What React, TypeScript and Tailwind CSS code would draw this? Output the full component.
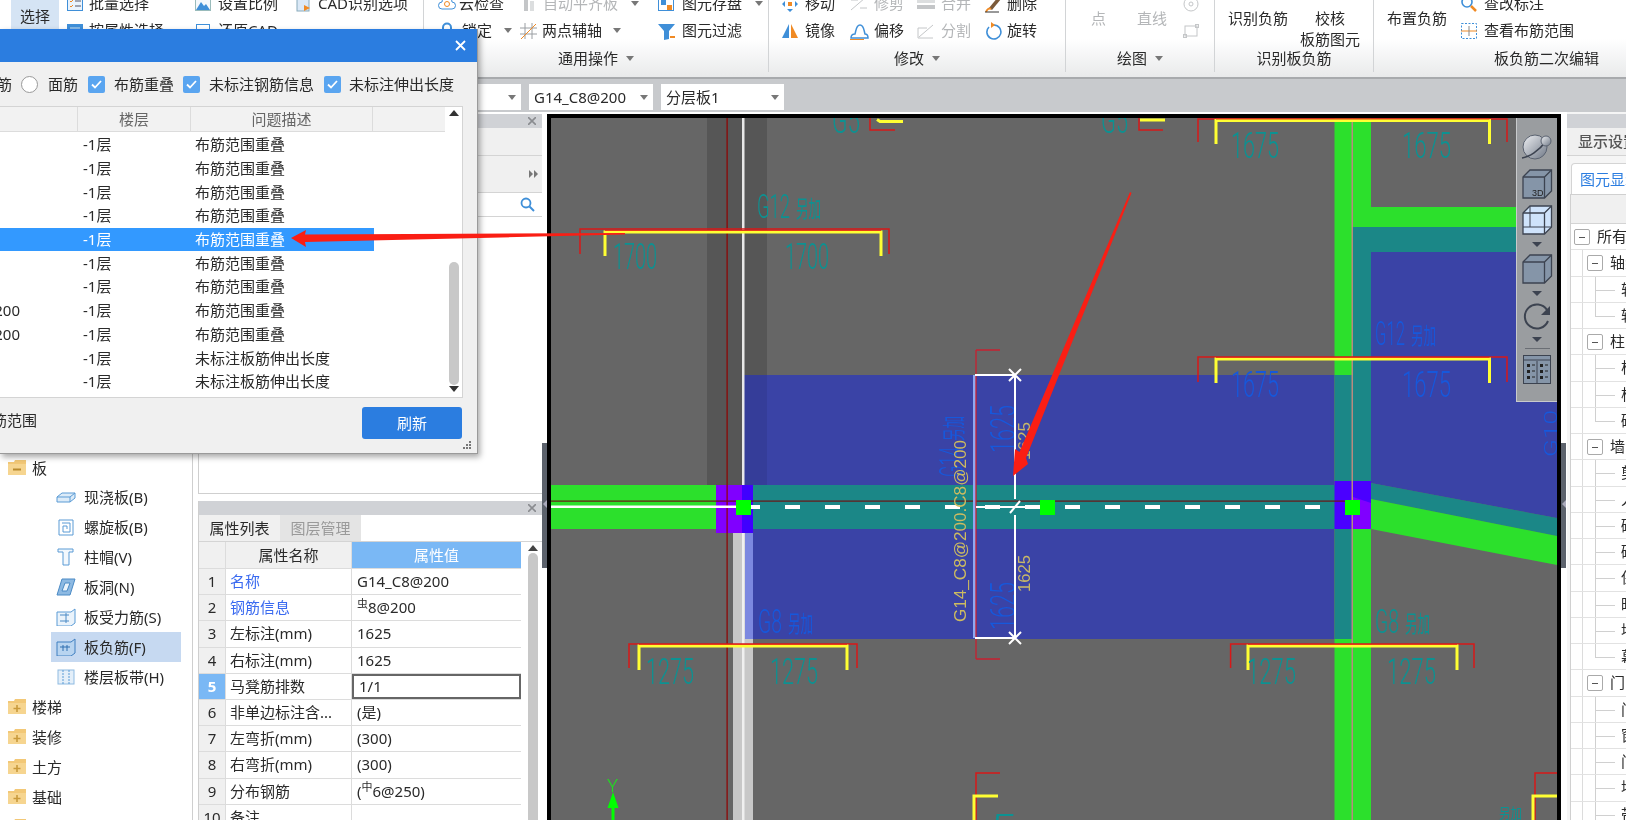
import React from "react";

const B = "#3f8fd8";
const O = "#f08a24";
const G = "#c4c6c8";
const TX = "text-[#2a2a2a]";

const Svg = ({ children, w = 18, h = 18 }: { children: React.ReactNode; w?: number; h?: number }) => (
  <svg width={w} height={h} viewBox={`0 0 ${w} ${h}`} fill="none" className="flex-none">{children}</svg>
);

const ic = {
  batch: <Svg><rect x="1.5" y="2.5" width="15" height="13" stroke={B} fill="#eaf3fc" /><path d="M4 6l1 1 2-2M4 11l1 1 2-2" stroke={O} /><path d="M9 6h6M9 11h6" stroke="#556" /></Svg>,
  attr: <Svg><rect x="1" y="2" width="16" height="14" fill={B} /><path d="M4 6h10M4 10h10" stroke="#cfe4f7" /></Svg>,
  scale: <Svg><rect x="1.5" y="2.5" width="15" height="13" fill="#f4f8fc" stroke="#9bb" /><path d="M2 15l5-8 3 4 2-2 4 6z" fill={B} /></Svg>,
  restore: <Svg><rect x="2.5" y="2.5" width="13" height="13" stroke={B} /><circle cx="11" cy="12" r="4" stroke={O} fill="#fff" /></Svg>,
  cadopt: <Svg><rect x="2" y="2" width="12" height="14" fill="#dbe9f7" stroke="#8ab" /><path d="M9 10l6 3-6 3z" fill={O} /></Svg>,
  cloud: <Svg><path d="M4 14a3.5 3.5 0 0 1 0-7 5 5 0 0 1 10 0 3.5 3.5 0 0 1 0 7z" stroke={B} fill="#fff" /><circle cx="9" cy="9" r="2.5" stroke={O} /></Svg>,
  align: <Svg w={13}><rect x="1" y="2" width="4" height="14" fill={G} /><rect x="7" y="6" width="4" height="10" fill="#dcdedf" /></Svg>,
  save: <Svg><rect x="1.5" y="2.5" width="15" height="13" stroke={B} fill="#fff" /><rect x="4" y="5" width="5" height="5" fill={B} /><rect x="10" y="10" width="5" height="5" fill={O} /></Svg>,
  lock: <Svg><path d="M5 9V5.5a4 4 0 0 1 8 0V9" stroke={B} strokeWidth="2" /><rect x="3" y="9" width="12" height="8" rx="1" fill={B} /></Svg>,
  axis: <Svg w={19}><path d="M6 1v16M13 1v16M1 6h17M1 12h17" stroke="#9a9ea2" /><path d="M2 17L17 2" stroke={O} /></Svg>,
  filter: <Svg w={19}><path d="M1 2h17l-6 7v8l-5 1V9z" fill={B} /><rect x="13" y="14" width="5" height="2" fill={O} /></Svg>,
  move: <Svg><path d="M9 1l3 3H6zM9 17l3-3H6zM1 9l3-3v6zM17 9l-3-3v6z" fill={B} /><rect x="7" y="7" width="4" height="4" fill={O} /></Svg>,
  mirror: <Svg><path d="M8 2v14H1z" fill={B} /><path d="M10 2v14h7z" fill={O} /></Svg>,
  trim: <Svg><path d="M1 15L15 3M1 5h7M10 13h7" stroke={G} /></Svg>,
  merge: <Svg w={20}><rect x="1" y="4" width="18" height="4" fill="#dcdedf" /><rect x="1" y="10" width="18" height="4" fill={G} /></Svg>,
  del: <Svg><path d="M5 13L14 2l3 2-9 11z" fill="#7b5a3a" /><path d="M2 17c1-3 3-4 5-3" stroke={O} strokeWidth="2" /><path d="M1 17h14" stroke="#333" /></Svg>,
  offset: <Svg w={21}><path d="M2 16c0-2 1-4 4-4 1-3 1-9 5-9s4 6 5 9c2 0 3 2 3 4z" stroke={B} strokeWidth="1.5" fill="#fff" /><path d="M1 17.5h14" stroke={O} /></Svg>,
  split: <Svg w={20}><path d="M2 16h15M2 16V6h9M3 15L17 3" stroke={G} /></Svg>,
  rot: <Svg><path d="M10 3a7 7 0 1 1-5 2" stroke={B} strokeWidth="1.6" /><path d="M7 0l4 3-4 3z" fill={O} /></Svg>,
  circ: <Svg><circle cx="9" cy="9" r="7" stroke={G} /><circle cx="9" cy="9" r="2" stroke={G} /></Svg>,
  rect: <Svg><rect x="3" y="4" width="12" height="10" stroke={G} /><rect x="1.5" y="12.5" width="3" height="3" stroke={G} /><rect x="13.5" y="2.5" width="3" height="3" stroke={G} /></Svg>,
  query: <Svg><circle cx="7" cy="7" r="5" stroke={B} strokeWidth="1.6" fill="#fff" /><path d="M11 11l5 5" stroke={O} strokeWidth="2.5" /></Svg>,
  range: <Svg><rect x="1.5" y="1.5" width="15" height="15" stroke={B} strokeDasharray="2 1.5" /><path d="M1 9h16" stroke={O} /><path d="M9 4v10" stroke="#888" /></Svg>,
};

const Arrow = ({ cls = "ml-2" }: { cls?: string }) => (
  <svg width="8" height="5" viewBox="0 0 8 5" className={`flex-none ${cls}`}><path d="M0 0h8L4 5z" fill="#777" /></svg>
);

const Tool = ({ icon, label, gray, arrow, gap = "gap-[5px]", arrowCls }: { icon?: React.ReactNode; label: string; gray?: boolean; arrow?: boolean; gap?: string; arrowCls?: string }) => (
  <div className={`flex items-center h-[27px] whitespace-nowrap ${gap} ${gray ? "text-[#b4b6b8]" : TX}`}>
    {icon}
    <span>{label}</span>
    {arrow && <Arrow cls={arrowCls ?? "ml-[3px]"} />}
  </div>
);

const Col = ({ cls, children }: { cls: string; children: React.ReactNode }) => <div className={`flex-none flex flex-col ${cls}`}>{children}</div>;

const Group = ({ w, label, last, labelCls = "justify-center", children }: { w: string; label?: string; last?: boolean; labelCls?: string; children: React.ReactNode }) => (
  <div className={`flex-none flex flex-col h-[72px] ${w} ${last ? "" : "border-r border-[#d2d4d6]"}`}>
    <div className="h-[54px] -mt-[10px] flex">{children}</div>
    <div className={`h-[28px] flex items-center ${labelCls} ${TX}`}>
      {label && <span>{label}</span>}
      {label && label !== "识别板负筋" && label !== "板负筋二次编辑" && <Arrow />}
    </div>
  </div>
);

const BigLabel = ({ cls, gray, children }: { cls: string; gray?: boolean; children: React.ReactNode }) => (
  <div className={`flex-none pt-[18px] text-center leading-[21px] ${cls} ${gray ? "text-[#b4b6b8]" : TX}`}>{children}</div>
);

const Ribbon = () => (
  <div className="h-[77px] flex overflow-hidden bg-gradient-to-b from-white from-50% to-[#e9eaeb] flex-none">
    <Group w="w-[424px]">
      <div className={`flex-none ml-[11px] w-[48px] bg-[#d5e4f4] flex items-start justify-center pt-[19px] ${TX}`}>选择</div>
      <Col cls="ml-[7px] w-[128px]">
        <Tool icon={ic.batch} label="批量选择" />
        <Tool icon={ic.attr} label="按属性选择" />
      </Col>
      <Col cls="w-[101px]">
        <Tool icon={ic.scale} label="设置比例" gap="gap-[6px]" />
        <Tool icon={ic.restore} label="还原CAD" gap="gap-[6px]" />
      </Col>
      <Col cls="">
        <Tool icon={ic.cadopt} label="CAD识别选项" />
      </Col>
    </Group>
    <Group w="w-[345px]" label="通用操作">
      <Col cls="ml-[14px] w-[81px]">
        <Tool icon={ic.cloud} label="云检查" gap="gap-[3px]" />
        <Tool icon={ic.lock} label="锁定" gap="gap-[6px]" arrow arrowCls="ml-[6px]" />
      </Col>
      <Col cls="w-[138px]">
        <div className="pl-[4px]"><Tool icon={ic.align} label="自动平齐板" gray arrow gap="gap-[7px]" arrowCls="ml-[6px]" /></div>
        <Tool icon={ic.axis} label="两点辅轴" gap="gap-[4px]" arrow arrowCls="ml-[7px]" />
      </Col>
      <Col cls="">
        <Tool icon={ic.save} label="图元存盘" gap="gap-[7px]" arrow arrowCls="ml-[6px]" />
        <Tool icon={ic.filter} label="图元过滤" gap="gap-[6px]" />
      </Col>
    </Group>
    <Group w="w-[297px]" label="修改">
      <Col cls="ml-[12px] w-[68px]">
        <Tool icon={ic.move} label="移动" gap="gap-[6px]" />
        <Tool icon={ic.mirror} label="镜像" gap="gap-[6px]" />
      </Col>
      <Col cls="w-[67px]">
        <div className="pl-[1px]"><Tool icon={ic.trim} label="修剪" gray gap="gap-[6px]" /></div>
        <Tool icon={ic.offset} label="偏移" gap="gap-[4px]" />
      </Col>
      <Col cls="w-[68px]">
        <Tool icon={ic.merge} label="合并" gray />
        <Tool icon={ic.split} label="分割" gray />
      </Col>
      <Col cls="">
        <Tool icon={ic.del} label="删除" gap="gap-[5px]" />
        <Tool icon={ic.rot} label="旋转" gap="gap-[5px]" />
      </Col>
    </Group>
    <Group w="w-[149px]" label="绘图">
      <BigLabel cls="ml-[25px] w-[46px] text-left" gray>点</BigLabel>
      <BigLabel cls="w-[45px] text-left" gray>直线</BigLabel>
      <Col cls="">
        <div className="h-[27px] flex items-center">{ic.circ}</div>
        <div className="h-[27px] flex items-center">{ic.rect}</div>
      </Col>
    </Group>
    <Group w="w-[159px]" label="识别板负筋">
      <BigLabel cls="ml-[13px] w-[60px]">识别负筋</BigLabel>
      <BigLabel cls="ml-[12px] w-[60px]">校核<br />板筋图元</BigLabel>
    </Group>
    <Group w="flex-1" label="板负筋二次编辑" labelCls="justify-start pl-[120px]" last>
      <BigLabel cls="ml-[13px] w-[60px]">布置负筋</BigLabel>
      <Col cls="ml-[13px]">
        <Tool icon={ic.query} label="查改标注" gap="gap-[6px]" />
        <Tool icon={ic.range} label="查看布筋范围" gap="gap-[6px]" />
      </Col>
    </Group>
  </div>
);

const Select = ({ cls, text }: { cls: string; text?: string }) => (
  <div className={`flex-none h-[26px] bg-white flex items-center pl-[5px] pr-[5px] ${TX} ${cls}`}>
    <span className="flex-1">{text}</span>
    <Arrow cls="" />
  </div>
);

const Toolbar = () => (
  <div className="h-[35px] flex-none flex items-start pt-[5px] pl-[400px] gap-[8px] bg-[#c8cacd] border-t-2 border-[#a8aaad]">
    <Select cls="w-[121px]" />
    <Select cls="w-[124px]" text="G14_C8@200" />
    <Select cls="w-[123px]" text="分层板1" />
  </div>
);

const Folder = ({ minus }: { minus?: boolean }) => (
  <svg width="20" height="18" viewBox="0 0 20 18" className="flex-none">
    <path d="M1 3h6l1-2h11v15H1z" fill="#f2c877" />
    <rect x="1" y="5" width="18" height="11" fill="#f6d590" />
    {minus ? <path d="M6 10.5h8" stroke="#b98a2e" strokeWidth="2" /> : <path d="M6.5 10.5h7M10 7v7" stroke="#c99a3c" strokeWidth="1.6" />}
  </svg>
);

const treeIcons: Record<string, React.ReactNode> = {
  slab: <Svg w={20}><path d="M1 9l5-4h13v5l-5 4H1z" fill="#dcebf8" stroke="#5a9bd5" /><path d="M1 9h13v5M14 9l5-4" stroke="#5a9bd5" /></Svg>,
  spiral: <Svg w={20}><path d="M3 2h14v15H3zM6 5h8v9H7V8h4v3" stroke="#5a9bd5" /></Svg>,
  cap: <Svg w={20}><path d="M2 1h15v3h-4v13H7V4H2z" stroke="#5a9bd5" fill="#f3f8fd" /></Svg>,
  hole: <Svg w={20}><path d="M6 1h13l-5 16H1z" fill="#8db9e2" stroke="#4a8ac5" /><path d="M9 5h5l-3 8H6z" fill="#eaf3fb" stroke="#4a8ac5" /></Svg>,
  force: <Svg w={20}><path d="M1 4h14l4-3v14l-4 3H1z" fill="#eaf3fb" stroke="#5a9bd5" /><path d="M4 7h9M4 13h9M10 5v10" stroke="#4a8ac5" /></Svg>,
  neg: <Svg w={20}><path d="M1 4h14l4-3v14l-4 3H1z" fill="#b8d4f0" stroke="#3f7fc0" /><path d="M4 9h10M7 7v6M11 7v6" stroke="#2f6fb0" /></Svg>,
  band: <Svg w={20}><rect x="2" y="2" width="16" height="14" fill="#e4eff9" stroke="#8fbbe2" /><path d="M7 2v14M13 2v14" stroke="#5a9bd5" strokeDasharray="2 1" /></Svg>,
};

const LeftTree = () => (
  <div className={`flex-none w-[193px] border-r border-[#cfcfcf] bg-white pt-[342px] overflow-hidden ${TX}`}>
    <div className="h-[28px] flex items-center pl-[7px] gap-[5px]"><Folder minus /><span>板</span></div>
    {[
      ["slab", "现浇板(B)"], ["spiral", "螺旋板(B)"], ["cap", "柱帽(V)"], ["hole", "板洞(N)"], ["force", "板受力筋(S)"], ["neg", "板负筋(F)"], ["band", "楼层板带(H)"],
    ].map(([k, t]) => (
      <div key={t} className={`h-[30px] ml-[51px] w-[130px] flex items-center pl-[5px] gap-[8px] ${k === "neg" ? "bg-[#c6d9f1]" : ""}`}>
        {treeIcons[k]}<span className="whitespace-nowrap">{t}</span>
      </div>
    ))}
    {["楼梯", "装修", "土方", "基础", ""].map((t, i) => (
      <div key={i} className="h-[30px] flex items-center pl-[7px] gap-[5px]"><Folder /><span>{t}</span></div>
    ))}
  </div>
);

const PanelHead = () => (
  <div className="h-[14px] flex-none bg-[#d0d2d6] flex items-center justify-end pr-[6px]">
    <svg width="8" height="8" viewBox="0 0 8 8"><path d="M0 0l8 8M8 0L0 8" stroke="#8a8c90" strokeWidth="1.6" /></svg>
  </div>
);

const props: [string, React.ReactNode, boolean?][] = [
  ["名称", "G14_C8@200", true],
  ["钢筋信息", <><sup className="text-[11px] -top-[4px] relative align-baseline">虫</sup>8@200</>, true],
  ["左标注(mm)", "1625"],
  ["右标注(mm)", "1625"],
  ["马凳筋排数", "1/1"],
  ["非单边标注含...", "(是)"],
  ["左弯折(mm)", "(300)"],
  ["右弯折(mm)", "(300)"],
  ["分布钢筋", <>(<sup className="text-[11px] -top-[4px] relative align-baseline">中</sup>6@250)</>],
  ["备注", ""],
];

const MidPanel = () => (
  <div className={`flex-none w-[344px] ml-[5px] flex flex-col ${TX}`}>
    <div className="h-[380px] mt-[2px] flex-none flex flex-col border-l border-b border-[#cfcfcf] bg-white">
      <PanelHead />
      <div className="h-[28px] flex-none bg-[#f0f0f0] border-b border-[#d4d4d4]" />
      <div className="h-[37px] flex-none bg-[#f0f0f0] border-b border-[#d4d4d4] flex items-center justify-end pr-[3px]">
        <svg width="10" height="8" viewBox="0 0 10 8"><path d="M0 0l4 4-4 4zM5 0l4 4-4 4z" fill="#777" /></svg>
      </div>
      <div className="h-[24px] flex-none border-b border-[#d4d4d4] flex items-center justify-end pr-[7px]">
        <svg width="15" height="15" viewBox="0 0 15 15" fill="none"><circle cx="6" cy="6" r="4.5" stroke="#3f8fd8" strokeWidth="1.8" /><path d="M9.5 9.5L14 14" stroke="#3f8fd8" strokeWidth="2" /></svg>
      </div>
    </div>
    <div className="mt-[7px] flex-1 flex flex-col border-l border-[#cfcfcf] bg-white overflow-hidden">
      <PanelHead />
      <div className="h-[27px] flex-none flex border-b border-[#d4d4d4]">
        <div className="w-[81px] flex items-center justify-center bg-[#f0f0f0]">属性列表</div>
        <div className="w-[81px] flex items-center justify-center bg-[#e4e4e4] text-[#9a9a9a]">图层管理</div>
      </div>
      <div className="flex flex-1">
        <div className="w-[322px] flex-none">
          <div className="h-[27px] flex border-b border-[#dcdcdc]">
            <div className="w-[27px] bg-[#f0f0f0] border-r border-[#dcdcdc]" />
            <div className="w-[126px] bg-[#f0f0f0] border-r border-[#dcdcdc] flex items-center justify-center">属性名称</div>
            <div className="flex-1 bg-[#7ab8f5] text-white flex items-center justify-center">属性值</div>
          </div>
          {props.map(([k, v, blue], i) => (
            <div key={k} className="h-[26.2px] flex border-b border-[#dcdcdc]">
              <div className={`w-[27px] flex-none border-r border-[#dcdcdc] flex items-center justify-center ${i === 4 ? "bg-[#7ab8f5] text-white font-bold" : "bg-[#f0f0f0]"}`}>{i + 1}</div>
              <div className={`w-[126px] flex-none border-r border-[#dcdcdc] flex items-center pl-[4px] whitespace-nowrap ${blue ? "text-[#3a6af0]" : ""}`}>{k}</div>
              <div className={`flex-1 flex items-center pl-[5px] ${i === 4 ? "border-2 border-[#666] pl-[4px]" : ""}`}>{v}</div>
            </div>
          ))}
        </div>
        <div className="flex-1 flex flex-col items-center pl-[7px] pr-[5px]">
          <svg width="10" height="6" viewBox="0 0 10 6" className="mt-[3px] flex-none"><path d="M0 6h10L5 0z" fill="#444" /></svg>
          <div className="w-[10px] flex-1 mt-[2px] bg-[#c8c8c8] rounded-t-[5px]" />
        </div>
      </div>
    </div>
  </div>
);

const Splitter = () => (
  <div className="flex-none w-[5px] flex flex-col bg-white">
    <div className="h-[331px] flex-none" />
    <div className="h-[125px] flex-none bg-[#5c626c] flex flex-col items-center pt-[57px]">
      <svg width="4" height="8" viewBox="0 0 4 8"><path d="M4 0v8L0 4z" fill="#aab" /></svg>
    </div>
  </div>
);

const TEAL = "#0c9292";
const BLUE = "#1658dc";

const Cad = ({ x, y, w, h, t, fill, rot }: { x: number; y: number; w: number; h: number; t: string; fill: string; rot?: boolean }) => (
  <text
    x={x}
    y={y}
    fill={fill}
    fontSize={h * 1.39}
    fontWeight={300}
    fontFamily="Roboto, 'Liberation Sans', sans-serif"
    textLength={w}
    lengthAdjust="spacingAndGlyphs"
    transform={rot ? `rotate(-90 ${x} ${y})` : undefined}
  >
    {t}
  </text>
);

const Tag = ({ x, y, g, gw, fill, rot }: { x: number; y: number; g: string; gw: number; fill: string; rot?: boolean }) => (
  <g transform={rot ? `rotate(-90 ${x} ${y})` : undefined}>
    <Cad x={x} y={y} w={gw} h={24} t={g} fill={fill} />
    <text x={x + gw + 6} y={y - 1} fontSize="23" fill={fill} fontFamily="'Noto Sans CJK SC', sans-serif" textLength={25} lengthAdjust="spacingAndGlyphs">另加</text>
  </g>
);

const Bracket = ({ rx1, rx2, ry, rb, yx1, yx2, yy, yb }: { rx1: number; rx2: number; ry: number; rb: number; yx1: number; yx2: number; yy: number; yb: number }) => (
  <g fill="none">
    <path d={`M${rx1} ${rb}V${ry}H${rx2}V${rb}`} stroke="#d81818" strokeWidth="1.5" />
    <path d={`M${yx1} ${yb}V${yy}H${yx2}V${yb}`} stroke="#ffff33" strokeWidth="3" />
    <path d={`M${yx1} ${yy - 1.5}H${yx2}`} stroke="#e83a18" strokeWidth="1" />
  </g>
);

const dashes = [785, 825, 865, 905, 945, 985, 1025, 1065, 1105, 1145, 1185, 1225, 1265, 1305];

const Canvas = () => (
  <div className="relative flex-none w-[1014px] h-[706px] mt-[2px] border-4 border-b-0 border-black bg-[#666666] overflow-hidden">
    <svg viewBox="551 118 1006 702" width="1006" height="702" className="block">
      <rect x="744" y="375" width="590" height="264" fill="#3a43a6" />
      <path d="M1371 252H1557V518L1371 483z" fill="#3a43a6" />
      <rect x="707" y="118" width="60" height="257" fill="#000" fillOpacity=".15" />
      <rect x="744" y="375" width="23" height="110" fill="#000" fillOpacity=".08" />
      <rect x="707" y="375" width="37" height="110" fill="#000" fillOpacity=".15" />
      <rect x="551" y="485" width="165" height="44" fill="#2ce02c" />
      <rect x="753" y="485" width="582" height="44" fill="#1b8787" />
      <rect x="1334.5" y="118" width="18.5" height="257" fill="#2ce02c" />
      <rect x="1353" y="118" width="18" height="89" fill="#2ce02c" />
      <rect x="1353" y="207" width="204" height="20" fill="#2ce02c" />
      <rect x="1353" y="227" width="204" height="25" fill="#1b8787" />
      <rect x="1353" y="252" width="18" height="230" fill="#1b8787" />
      <rect x="1334.5" y="375" width="18.5" height="107" fill="#1b8787" />
      <rect x="1334.5" y="529" width="18.5" height="110" fill="#1b8787" />
      <rect x="1353" y="529" width="18" height="291" fill="#2ce02c" />
      <rect x="1334.5" y="639" width="18.5" height="181" fill="#2ce02c" />
      <path d="M1371 483L1557 518V536L1371 499z" fill="#1b8787" />
      <path d="M1371 499L1557 536V565L1371 529z" fill="#2ce02c" />
      <rect x="716" y="485" width="26" height="48" fill="#8000ff" />
      <rect x="742" y="485" width="11" height="48" fill="#4000ff" />
      <rect x="1334.5" y="481" width="36.5" height="48" fill="#4a00ff" />
      <path d="M1353 497L1371 503V529H1353z" fill="#8000ff" />
      <rect x="733" y="533" width="20" height="287" fill="#c8c8c8" />
      <rect x="745" y="533" width="8" height="106" fill="#7c88e0" />
      <rect x="742" y="118" width="2.5" height="367" fill="#e8e8e8" />
      <rect x="742" y="533" width="2.5" height="287" fill="#f0f0f0" />
      <rect x="726.5" y="118" width="1.2" height="702" fill="#900000" />
      <rect x="1351.5" y="118" width="1.5" height="702" fill="#b88a80" />
      <rect x="551" y="500.5" width="794" height="1.2" fill="#6b1515" />
      <rect x="551" y="505.5" width="186" height="2.5" fill="#ffffff" />
      <rect x="751" y="505" width="9" height="4" fill="#fff" />
      {dashes.map((x) => <rect key={x} x={x} y="505" width="15" height="4" fill="#fff" />)}
      <rect x="736" y="500" width="15" height="15" fill="#00ff00" />
      <rect x="1040" y="500" width="15" height="15" fill="#00ff00" />
      <rect x="1345" y="500" width="15" height="15" fill="#00ff00" />

      <Bracket rx1={580} rx2={889} ry={229} rb={254} yx1={605} yx2={881} yy={232} yb={256} />
      <Bracket rx1={1198} rx2={1507} ry={119} rb={142} yx1={1216} yx2={1489.5} yy={120.5} yb={144} />
      <Bracket rx1={1198} rx2={1507} ry={357} rb={382} yx1={1216} yx2={1489.5} yy={359} yb={383} />
      <Bracket rx1={629} rx2={857} ry={644} rb={668} yx1={639} yx2={847} yy={646} yb={670} />
      <Bracket rx1={1230.6} rx2={1474} ry={644} rb={668} yx1={1248} yx2={1457} yy={646} yb={670} />
      <path d="M870 118v12h25M1139 118v12h24" fill="none" stroke="#d81818" strokeWidth="1.5" />
      <path d="M877 119.5l3 2h23M1140 120h25" fill="none" stroke="#ffff33" strokeWidth="3" />
      <path d="M976 820V773H1000M1535 820V773H1557" fill="none" stroke="#d81818" strokeWidth="1.5" />
      <path d="M974 820V796H998M1533 820V796H1557" fill="none" stroke="#ffff33" strokeWidth="3" />

      <Cad x={613} y={269} w={44} h={26} t="1700" fill={TEAL} />
      <Cad x={785} y={269} w={44} h={26} t="1700" fill={TEAL} />
      <Cad x={1231} y={158} w={48} h={26} t="1675" fill={TEAL} />
      <Cad x={1402} y={158} w={49} h={26} t="1675" fill={TEAL} />
      <Cad x={646} y={684} w={48} h={27} t="1275" fill={TEAL} />
      <Cad x={770} y={684} w={48} h={27} t="1275" fill={TEAL} />
      <Cad x={1247} y={684} w={49} h={27} t="1275" fill={TEAL} />
      <Cad x={1387} y={684} w={49} h={27} t="1275" fill={TEAL} />
      <Tag x={757} y={218} g="G12" gw={33} fill={TEAL} />
      <Tag x={1375} y={633} g="G8" gw={24} fill={TEAL} />
      <Cad x={832} y={133} w={28} h={26} t="G5" fill={TEAL} />
      <Cad x={1101} y={133} w={27} h={26} t="G5" fill={TEAL} />

      <Cad x={1231} y={397} w={48} h={27} t="1675" fill={BLUE} />
      <Cad x={1402} y={397} w={49} h={27} t="1675" fill={BLUE} />
      <Tag x={1375} y={345} g="G12" gw={30} fill={BLUE} />
      <Tag x={758} y={633} g="G8" gw={24} fill={BLUE} />
      <Tag x={963} y={477} g="G14" gw={30} fill={BLUE} rot />
      <Cad x={1015} y={453} w={48} h={25} t="1625" fill={BLUE} rot />
      <Cad x={1015} y={630} w={48} h={25} t="1625" fill={BLUE} rot />
      <Cad x={1557} y={457} w={47} h={13} t="G10" fill={BLUE} rot />

      <rect x="973" y="375" width="3" height="263" fill="#8ea8f0" />
      <path d="M976 350V659M976 350H1000M976 659H1000" fill="none" stroke="#c82030" strokeWidth="1.3" />
      <path d="M975 375H1015M975 638H1015M1015 375V499M1015 515V638M976 507H1040" fill="none" stroke="#fff" strokeWidth="2" />
      <path d="M1009 369L1021 381M1021 369L1009 381M1009 632L1021 644M1021 632L1009 644M1010 513L1020 501" stroke="#fff" strokeWidth="2" />
      <text x="966" y="622" fill="#cdbb60" fontSize="17" fontFamily="'Liberation Sans', sans-serif" textLength="182" lengthAdjust="spacingAndGlyphs" transform="rotate(-90 966 622)">G14_C8@200.C8@200</text>
      <text x="1030" y="460" fill="#c8b868" fontSize="16" fontFamily="'Liberation Sans', sans-serif" textLength="38" lengthAdjust="spacingAndGlyphs" transform="rotate(-90 1030 460)">1625</text>
      <text x="1030" y="592" fill="#c8b868" fontSize="16" fontFamily="'Liberation Sans', sans-serif" textLength="37" lengthAdjust="spacingAndGlyphs" transform="rotate(-90 1030 592)">1625</text>

      <text x="607" y="792" fill="#20e020" fontSize="19" fontWeight={300} fontFamily="Roboto, sans-serif" textLength="11" lengthAdjust="spacingAndGlyphs">Y</text>
      <path d="M613 792L618.5 808H607.5z" fill="#00ff00" />
      <rect x="611.5" y="808" width="3" height="12" fill="#00ff00" />

      <text x="1499" y="818" fill={TEAL} fontSize="14" fontFamily="'Noto Sans CJK SC', sans-serif" textLength="23" lengthAdjust="spacingAndGlyphs">另加</text>
      <Cad x={990} y={840} w={26} h={26} t="5" fill={TEAL} />
    </svg>
    <NavBar />
  </div>
);

const tri = <svg width="10" height="5" viewBox="0 0 10 5" className="flex-none"><path d="M0 0h10L5 5z" fill="#3c4350" /></svg>;

const Cube = ({ fill, inner, label }: { fill: string; inner?: boolean; label?: boolean }) => (
  <svg width="31" height="30" viewBox="0 0 31 30" className="flex-none">
    <path d="M1 8l7-7h21.5v21l-7 7H1z" fill={fill} stroke="#3c4350" strokeWidth="1.3" />
    <path d="M1 8h21.5v21M22.5 8l7-7" fill="none" stroke="#3c4350" strokeWidth="1.3" />
    {inner && <path d="M8 1v21H1M8 22h21.5" fill="none" stroke="#3c4350" strokeWidth="1" />}
    {label && <text x="10" y="27" fontSize="9" fill="#222" fontFamily="'Liberation Sans', sans-serif">3D</text>}
  </svg>
);

const NavBar = () => (
  <div className="absolute right-0 top-0 w-[41px] h-[284px] bg-[#9a9da0] border-l border-b border-[#c8cacc] flex flex-col items-center pt-[15px]">
    <svg width="32" height="28" viewBox="0 0 32 28" className="flex-none">
      <defs>
        <linearGradient id="sph" x1="0" y1="0" x2="1" y2="1"><stop offset="0" stopColor="#eef0f3" /><stop offset="1" stopColor="#6f7886" /></linearGradient>
      </defs>
      <circle cx="14" cy="14" r="12" fill="url(#sph)" stroke="#5a6270" />
      <path d="M1 25C8 24 18 18 25 8" fill="none" stroke="#3c4350" strokeWidth="1.6" />
      <circle cx="25" cy="8" r="5" fill="url(#sph)" stroke="#5a6270" />
    </svg>
    <div className="mt-[8px]"><Cube fill="#8595a8" label /></div>
    <div className="mt-[6px]"><Cube fill="#cfe3fb" inner /></div>
    <div className="mt-[7px]">{tri}</div>
    <div className="mt-[7px]"><Cube fill="#8595a8" /></div>
    <div className="mt-[7px]">{tri}</div>
    <svg width="30" height="28" viewBox="0 0 30 28" fill="none" className="flex-none mt-[6px]">
      <path d="M25 8A12 12 0 1 0 26 19" stroke="#3c4350" strokeWidth="2" />
      <path d="M28 4v9h-9z" fill="#3c4350" />
    </svg>
    <div className="mt-[7px]">{tri}</div>
    <div className="w-[25px] h-[1px] bg-[#6a6e74] mt-[6px] flex-none" />
    <svg width="28" height="29" viewBox="0 0 28 29" fill="none" className="flex-none mt-[6px]">
      <rect x=".5" y=".5" width="27" height="28" fill="#8595a8" stroke="#3c4350" />
      <path d="M1 5h26M14 6v22" stroke="#3c4350" />
      <path d="M4 9h3v3H4zM4 15h3v3H4zM4 21h3v3H4zM17 9h3v3h-3zM17 15h3v3h-3zM17 21h3v3h-3z" fill="#222" />
      <path d="M9 10h3M9 16h3M9 22h3M22 10h3M22 16h3M22 22h3" stroke="#222" />
    </svg>
  </div>
);

const right: [number, string][] = [
  [0, "所有"], [1, "轴线"], [2, "轴网"], [2, "辅助轴线"], [1, "柱"], [2, "柱"], [2, "构造柱"], [2, "砌体柱"], [1, "墙"], [2, "剪力墙"], [2, "人防门框墙"], [2, "砌体墙"], [2, "砌体加筋"], [2, "保温墙"], [2, "暗梁"], [2, "墙垛"], [2, "幕墙"], [1, "门窗洞"], [2, "门"], [2, "窗"], [2, "门联窗"], [2, "墙洞"], [2, "带形窗"], [2, "带形洞"],
];

const Box = ({ cls }: { cls: string }) => (
  <div className={`absolute top-[5px] w-[16px] h-[16px] bg-white border border-[#aaa] rounded-[2px] flex items-center justify-center ${cls}`}>
    <div className="w-[6px] h-[1px] bg-[#555]" />
  </div>
);

const RightPanel = () => (
  <div className={`flex-none w-[59px] ml-[1px] flex flex-col overflow-hidden bg-[#f5f5f5] ${TX}`}>
    <div className="h-[14px] mt-[2px] flex-none bg-[#d0d2d6]" />
    <div className="h-[28px] flex-none flex items-center pl-[11px] bg-[#f0f0f0] border-b border-[#d4d4d4] whitespace-nowrap text-[#555] font-medium">显示设置</div>
    <div className="h-[38px] flex-none pt-[7px] pl-[4px]">
      <div className="h-[31px] w-[100px] bg-white border border-b-0 border-[#d4d4d4] rounded-t-[4px] flex items-center pl-[8px] text-[#2b7de0] whitespace-nowrap">图元显示</div>
    </div>
    <div className="ml-[3px] flex-1 bg-white border-l border-t border-[#d0d0d0]">
      <div className="h-[29px] bg-[#f0f0f0] border-b border-[#d4d4d4]" />
      {right.map(([lv, t], i) => {
        const next = right[i + 1]?.[0];
        return (
          <div key={i} className="relative h-[26.25px] border-b border-[#e2e2e2] whitespace-nowrap">
            {i > 0 && <div className="absolute left-[11px] top-0 bottom-0 w-px bg-[#dcdcdc]" />}
            {lv === 0 && <Box cls="left-[3px]" />}
            {lv === 1 && <Box cls="left-[16px]" />}
            {lv === 2 && <>
              <div className={`absolute left-[24px] top-0 w-px bg-[#d0d0d0] ${next === 2 ? "bottom-0" : "h-[13px]"}`} />
              <div className="absolute left-[24px] w-[20px] top-[13px] h-px bg-[#d0d0d0]" />
            </>}
            <span className={`absolute top-[5px] ${lv === 0 ? "left-[26px]" : lv === 1 ? "left-[39px]" : "left-[50px]"}`}>{t}</span>
          </div>
        );
      })}
    </div>
  </div>
);

const Check = () => (
  <div className="flex-none w-[17px] h-[17px] rounded-[2px] bg-[#5aa5f0] flex items-center justify-center">
    <svg width="11" height="9" viewBox="0 0 11 9" fill="none"><path d="M1 4.5L4 7.5 10 1" stroke="#fff" strokeWidth="1.8" /></svg>
  </div>
);

const rows: [string, string, string][] = [
  ["", "-1层", "布筋范围重叠"], ["", "-1层", "布筋范围重叠"], ["", "-1层", "布筋范围重叠"], ["", "-1层", "布筋范围重叠"], ["", "-1层", "布筋范围重叠"], ["", "-1层", "布筋范围重叠"], ["", "-1层", "布筋范围重叠"],
  ["G14_C8@200", "-1层", "布筋范围重叠"], ["G14_C8@200", "-1层", "布筋范围重叠"], ["", "-1层", "未标注板筋伸出长度"], ["", "-1层", "未标注板筋伸出长度"],
];

const Dialog = () => (
  <div className={`absolute left-0 top-[29px] w-[478px] h-[425px] bg-[#f0f0f0] border-r border-b border-[#9a9a9a] shadow-[2px_3px_6px_rgba(0,0,0,0.35)] flex flex-col ${TX}`}>
    <div className="h-[33px] flex-none bg-[#2b7de0] flex items-center justify-end pr-[11px]">
      <svg width="11" height="11" viewBox="0 0 11 11"><path d="M1 1l9 9M10 1L1 10" stroke="#fff" strokeWidth="1.8" /></svg>
    </div>
    <div className="h-[44px] flex-none flex items-center overflow-hidden whitespace-nowrap">
      <span className="-ml-[3px]">筋</span>
      <div className="flex-none ml-[9px] w-[17px] h-[17px] rounded-full bg-white border border-[#999]" />
      <span className="ml-[10px]">面筋</span>
      <div className="ml-[10px]"><Check /></div>
      <span className="ml-[9px]">布筋重叠</span>
      <div className="ml-[9px]"><Check /></div>
      <span className="ml-[9px]">未标注钢筋信息</span>
      <div className="ml-[10px]"><Check /></div>
      <span className="ml-[8px]">未标注伸出长度</span>
    </div>
    <div className="w-[463px] h-[292px] flex-none bg-white border-r border-b border-t border-[#d4d4d4] flex">
      <div className="w-[445px] flex-none flex flex-col">
        <div className="h-[25px] flex-none flex bg-[#f2f2f2] border-b border-[#dcdcdc] text-[#666]">
          <div className="w-[78px] border-r border-[#dcdcdc]" />
          <div className="w-[113px] border-r border-[#dcdcdc] flex items-center justify-center">楼层</div>
          <div className="w-[182px] border-r border-[#dcdcdc] flex items-center justify-center">问题描述</div>
        </div>
        <div className="pt-[1px]">
          {rows.map(([a, f, d], i) => (
            <div key={i} className={`h-[23.7px] flex w-[374px] items-center whitespace-nowrap ${i === 4 ? "bg-[#3399ff] text-white" : ""}`}>
              <div className="w-[78px] flex-none flex justify-end overflow-hidden pr-[58px]"><span className="flex-none">{a}</span></div>
              <div className="w-[117px] flex-none pl-[5px]">{f}</div>
              <div>{d}</div>
            </div>
          ))}
        </div>
      </div>
      <div className="flex-1 flex flex-col items-center">
        <svg width="10" height="6" viewBox="0 0 10 6" className="mt-[3px] flex-none"><path d="M0 6h10L5 0z" fill="#333" /></svg>
        <div className="w-[10px] h-[123px] mt-[146px] bg-[#c8c8c8] rounded-[5px] flex-none" />
        <svg width="10" height="6" viewBox="0 0 10 6" className="mt-[1px] flex-none"><path d="M0 0h10L5 6z" fill="#333" /></svg>
      </div>
    </div>
    <div className="flex-1 relative flex items-start pt-[9px]">
      <span className="-ml-[8px] mt-[6px] whitespace-nowrap">筋范围</span>
      <div className="ml-auto mr-[15px] w-[100px] h-[32px] rounded-[3px] bg-[#2b7de0] text-white flex items-center justify-center">刷新</div>
      <svg width="10" height="10" viewBox="0 0 10 10" className="absolute right-[5px] bottom-[3px]">
        <path d="M7 1h2v2H7zM4 4h2v2H4zM7 4h2v2H7zM1 7h2v2H1zM4 7h2v2H4zM7 7h2v2H7z" fill="#777" />
      </svg>
    </div>
  </div>
);

export default function App() {
  return (
    <div className="relative w-[1626px] h-[820px] overflow-hidden bg-[#f0f0f0] text-[15px] leading-none font-['Noto_Sans','Noto_Sans_CJK_SC',sans-serif] blur-[0.4px]">
      <div className="flex flex-col h-full">
        <Ribbon />
        <Toolbar />
        <div className="flex-1 flex min-h-0 bg-white">
          <LeftTree />
          <MidPanel />
          <Splitter />
          <Canvas />
          <Splitter />
          <RightPanel />
        </div>
      </div>
      <Dialog />
      <svg className="absolute left-0 top-0 pointer-events-none" width="1626" height="820" viewBox="0 0 1626 820">
        <path d="M291 238L306 230L305 234.5L625 233L625 234.5L305 242L306 247z" fill="#fa1e14" />
        <path d="M1130 192L1131.5 193L1026 458L1028 464L1013 476L1015 449L1019.5 452z" fill="#fa1e14" />
      </svg>
    </div>
  );
}
